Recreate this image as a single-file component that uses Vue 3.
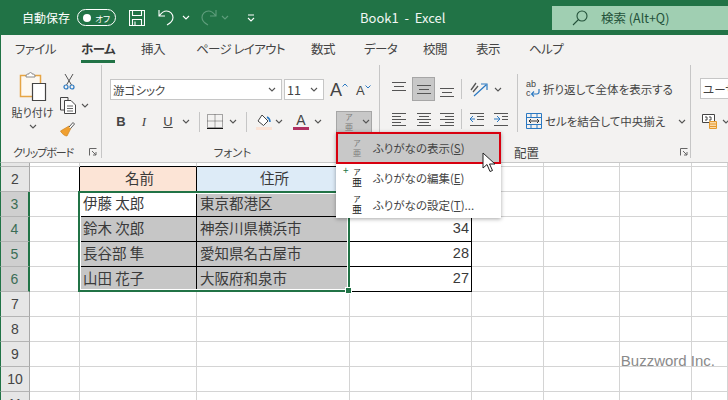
<script setup>
// タブの幅は文字と次のタブまでの間隔を含む
const tabs = [
  { label: 'ファイル', width: 66 },
  { label: 'ホーム', width: 60 },
  { label: '挿入', width: 55 },
  { label: 'ページ レイアウト', width: 115 },
  { label: '数式', width: 53 },
  { label: 'データ', width: 59 },
  { label: '校閲', width: 53 },
  { label: '表示', width: 53 },
  { label: 'ヘルプ', width: 40 }
]

const rowData = {
  2: ['', '名前', '住所', ''],
  3: ['', '伊藤 太郎', '東京都港区', ''],
  4: ['', '鈴木 次郎', '神奈川県横浜市', '34'],
  5: ['', '長谷部 隼', '愛知県名古屋市', '28'],
  6: ['', '山田 花子', '大阪府和泉市', '27']
}
const rows = [2, 3, 4, 5, 6, 7, 8, 9, 10, 11]
const columns = [0, 1, 2, 3, 4, 5, 6, 7]

const cellText = (r, c) => (rowData[r] ? rowData[r][c] || '' : '')

// 表の罫線と選択範囲の色
const cellClass = (r, c) => ({
  head1: r === 2 && c === 1,
  head2: r === 2 && c === 2,
  picked: r >= 3 && r <= 6 && (c === 2 || (c === 1 && r > 3)),
  lineRight: r >= 2 && r <= 6 && c <= 3,
  lineBottom: r >= 2 && r <= 6 && c >= 1 && c <= 3,
  num: c === 3
})
</script>

<template>
  <div class="window">
    <header class="titlebar">
      <span class="autosave">自動保存</span>
      <span class="toggle"><i class="dot"></i><em>オフ</em></span>
      <svg class="qat save" viewBox="0 0 16 16"><path d="M.5.5h15v15H.5zM3.5.5v5h9v-5M3.5 15.5v-6h9v6M6 11.5v4" /></svg>
      <svg class="qat undo" viewBox="0 0 16 17"><path d="M1 1v6h6M1.5 6.5C4 3 6 2 8.500 2 12 2 15 5 15 8.500 15 12 12.500 14 9 16" /></svg>
      <svg class="chev light" viewBox="0 0 8 5"><path d="M1 1l3 3 3-3" /></svg>
      <svg class="qat redo" viewBox="0 0 16 17"><path d="M15 1v6H9M14.500 6.500C12 3 10 2 7.500 2 4 2 1 5 1 8.500 1 12 3.500 14 7 16" /></svg>
      <svg class="chev dim" viewBox="0 0 8 5"><path d="M1 1l3 3 3-3" /></svg>
      <svg class="custom" viewBox="0 0 8 8"><path d="M1 1h6M1 4l3 3 3-3" /></svg>
      <span class="doc">Book1&nbsp; -&nbsp; Excel</span>
      <div class="search">
        <svg viewBox="0 0 16 16"><circle cx="10" cy="6" r="5" /><path d="M6.500 9.500L1 15" /></svg>
        <span>検索 (Alt+Q)</span>
      </div>
    </header>

    <nav class="tabs">
      <span v-for="t in tabs" :key="t.label" class="tab" :class="{ on: t.label === 'ホーム' }" :style="{ width: t.width + 'px' }">{{ t.label }}</span>
    </nav>

    <section class="ribbon">
      <div class="group clip">
        <div class="body clipbody">
          <div class="paste">
            <svg viewBox="0 0 28 31" width="28" height="31">
              <path d="M1.500 4.500h20v21h-20z" fill="#fdf8f0" stroke="#e6a544" stroke-width="1.500" />
              <path d="M7 5c0-2 2-2 3-2 0-2 3-2 3 0 1 0 3 0 3 2v1H7z" fill="#fff" stroke="#8a8a8a" />
              <path d="M13.500 12.500h13v17h-13z" fill="#fff" stroke="#444" stroke-width="1.200" />
            </svg>
            <span>貼り付け</span>
            <svg class="chev" viewBox="0 0 8 5"><path d="M1 1l3 3 3-3" /></svg>
          </div>
          <div class="cliptools">
            <svg viewBox="0 0 12 17" width="12" height="17"><path d="M2 1l6.500 11M10 1L3.500 12" fill="none" stroke="#555" /><circle cx="3" cy="14" r="2" fill="none" stroke="#2b79c2" stroke-width="1.200" /><circle cx="9" cy="14" r="2" fill="none" stroke="#2b79c2" stroke-width="1.200" /></svg>
            <div class="copyline">
              <svg viewBox="0 0 16 17" width="16" height="17"><path d="M5 13H.5V.5H8V3" fill="none" stroke="#444" /><path d="M4.500 3.500H11L15.500 8v8.500h-11z" fill="#fff" stroke="#444" /><path d="M7 9h6M7 11.500h6M7 14h6" stroke="#666" /></svg>
              <svg class="chev" viewBox="0 0 8 5"><path d="M1 1l3 3 3-3" /></svg>
            </div>
            <svg viewBox="0 0 16 16" width="16" height="16"><path d="M9 5l2 2-4 8c-2 0-5-2-6.500-5z" fill="#f0a030" stroke="#cf8420" stroke-width=".7" /><path d="M9 6l4-4.500 1.500 1.500L10.500 7.500" fill="#fff" stroke="#555" /></svg>
          </div>
        </div>
        <footer class="label cliplabel"><span>クリップボード</span><svg class="launcher" viewBox="0 0 8 8"><path d="M.5 7.500v-7h7M3 3l4 4M7 4v3H4" /></svg></footer>
      </div>

      <div class="group font">
        <div class="body fontbody">
          <div class="fontrow top">
            <div class="select fontname"><span>游ゴシック</span><svg class="chev" viewBox="0 0 8 5"><path d="M1 1l3 3 3-3" /></svg></div>
            <div class="select fontsize"><span>11</span><svg class="chev" viewBox="0 0 8 5"><path d="M1 1l3 3 3-3" /></svg></div>
            <span class="growA">A<svg viewBox="0 0 6 4"><path d="M.5 3.500L3 1l2.500 2.500" /></svg></span>
            <span class="growA small">A<svg viewBox="0 0 6 4"><path d="M.5.500L3 3 5.500.500" /></svg></span>
          </div>
          <div class="fontrow second">
            <b class="fmt bold">B</b>
            <i class="fmt italic">I</i>
            <u class="fmt under">U</u>
            <svg class="chev" viewBox="0 0 8 5"><path d="M1 1l3 3 3-3" /></svg>
            <span class="sep"></span>
            <svg class="border" viewBox="0 0 16 15" width="16" height="15"><path d="M.5.500h15v13H.5zM8 .500v13M.5 7h15" fill="none" stroke="#555" stroke-dasharray="1 1" /><path d="M0 14.500h16" stroke="#111" /></svg>
            <svg class="chev" viewBox="0 0 8 5"><path d="M1 1l3 3 3-3" /></svg>
            <span class="sep"></span>
            <svg class="fill" viewBox="0 0 16 16" width="16" height="16"><path d="M6 1l6 6-4.500 4.500L2 7z" fill="#fff" stroke="#444" /><path d="M11 3c2 1 3 3 3 5" fill="none" stroke="#2b79c2" stroke-width="1.500" /><path d="M0 13h16v3H0z" fill="#fbe3d6" /></svg>
            <svg class="chev" viewBox="0 0 8 5"><path d="M1 1l3 3 3-3" /></svg>
            <span class="colorA">A</span>
            <svg class="chev" viewBox="0 0 8 5"><path d="M1 1l3 3 3-3" /></svg>
            <span class="rubybtn">
              <span class="ruby dimmed"><small>ア</small><span>亜</span></span>
              <svg class="chev" viewBox="0 0 8 5"><path d="M1 1l3 3 3-3" /></svg>
            </span>
          </div>
        </div>
        <footer class="label center"><span>フォント</span><svg class="launcher" viewBox="0 0 8 8"><path d="M.5 7.500v-7h7M3 3l4 4M7 4v3H4" /></svg></footer>
      </div>

      <div class="group align">
        <div class="body alignbody">
          <div class="aligncol">
            <div class="alignrow">
              <svg class="lines" viewBox="0 0 14 20"><path d="M0 3.500h14M2 7.500h10M0 11.500h14" /></svg>
              <span class="pressed"><svg class="lines" viewBox="0 0 14 20"><path d="M0 6.500h14M2 10.500h10M0 14.500h14" /></svg></span>
              <svg class="lines" viewBox="0 0 14 20"><path d="M0 9.500h14M2 13.500h10M0 17.500h14" /></svg>
              <span class="sep short"></span>
              <svg class="orient" viewBox="0 0 18 17" width="18" height="17"><path d="M1 9l5-7M3 11l5-6" stroke="#555" fill="none" stroke-width="1.300" /><path d="M4 15L16 4M11 3h6v6" stroke="#2b79c2" fill="none" stroke-width="1.200" /></svg>
              <svg class="chev" viewBox="0 0 8 5"><path d="M1 1l3 3 3-3" /></svg>
            </div>
            <div class="alignrow lower">
              <svg class="lines" viewBox="0 0 14 14"><path d="M0 1.500h14M0 4.500h9M0 7.500h14M0 10.500h9M0 13.500h14" /></svg>
              <svg class="lines" viewBox="0 0 14 14"><path d="M0 1.500h14M2 4.500h10M0 7.500h14M2 10.500h10M0 13.500h14" /></svg>
              <svg class="lines" viewBox="0 0 14 14"><path d="M0 1.500h14M5 4.500h9M0 7.500h14M5 10.500h9M0 13.500h14" /></svg>
              <span class="sep short"></span>
              <svg class="lines indent" viewBox="0 0 14 14"><path class="blue" d="M5 7H0M3 4L0 7l3 3" /><path d="M7 4.500h7M7 7.500h7M0 13.500h14M0 1.500h14" /></svg>
              <svg class="lines indent" viewBox="0 0 14 14"><path class="blue" d="M0 7h5M3 4l3 3-3 3" /><path d="M8 4.500h6M8 7.500h6M0 13.500h14M0 1.500h14" /></svg>
            </div>
          </div>
          <span class="sep tall"></span>
          <div class="wrapcol">
            <div class="wraprow">
              <span class="abc"><span>ab</span><span class="c">c</span><svg viewBox="0 0 9 8" width="9" height="8"><path d="M8 0v3a2 2 0 0 1-2 2H1M3 2.500L.500 5 3 7.500" fill="none" stroke="#2b79c2" stroke-width="1.200" /></svg></span>
              <span>折り返して全体を表示する</span>
            </div>
            <div class="wraprow">
              <svg class="merge" viewBox="0 0 16 16" width="16" height="16"><path d="M.5.500h15v15H.5zM.5 4.500h15M.5 11.500h15M5 .500v4M11 .500v4M5 11.500v4M11 11.500v4" fill="none" stroke="#2b79c2" /><path d="M3 8h10M5 6L3 8l2 2M11 6l2 2-2 2" fill="none" stroke="#333" /></svg>
              <span>セルを結合して中央揃え</span>
              <svg class="chev" viewBox="0 0 8 5"><path d="M1 1l3 3 3-3" /></svg>
            </div>
          </div>
        </div>
        <footer class="label alignlabel"><span>配置</span><svg class="launcher" viewBox="0 0 8 8"><path d="M.5 7.500v-7h7M3 3l4 4M7 4v3H4" /></svg></footer>
      </div>

      <div class="group number">
        <div class="select numfmt"><span>ユーザ</span></div>
        <div class="numtools">
          <svg viewBox="0 0 16 15" width="16" height="15"><path d="M.5.500h12v8H.5z" fill="#fff" stroke="#444" /><path d="M3 3h2v3H3M7 3h2v3H7" fill="none" stroke="#444" /><path d="M7.500 7.500h7v7h-7z" fill="#fbd9a8" stroke="#e59a2c" /><path d="M8 10h6M8 12.500h6" stroke="#e59a2c" /></svg>
          <svg class="chev" viewBox="0 0 8 5"><path d="M1 1l3 3 3-3" /></svg>
        </div>
      </div>
    </section>

    <section class="sheet">
      <div class="grid">
        <div class="stubhead"></div>
        <div v-for="c in columns" :key="'s' + c" class="cell stub" :class="{ lineStub: c === 1 || c === 2 || c === 3 }"></div>
        <template v-for="r in rows" :key="r">
          <div class="rowhead" :class="{ active: r >= 3 && r <= 6 }">{{ r }}</div>
          <div v-for="c in columns" :key="c" class="cell" :class="cellClass(r, c)">{{ cellText(r, c) }}</div>
        </template>
      </div>
      <div class="selection"><i class="handle"></i></div>
    </section>

    <div class="menu">
      <div class="item hot">
        <span class="ruby dimmed"><small>ア</small><span>亜</span></span>
        <span>ふりがなの表示(<u>S</u>)</span>
      </div>
      <div class="item">
        <span class="ruby"><em>+</em><small>ア</small><span>亜</span></span>
        <span>ふりがなの編集(<u>E</u>)</span>
      </div>
      <div class="item">
        <span class="ruby"><small>ア</small><span>亜</span></span>
        <span>ふりがなの設定(<u>T</u>)...</span>
      </div>
    </div>

    <svg class="cursor" viewBox="0 0 16 21" width="16" height="21"><path d="M1 1v15l4-3.500 3 7 2.500-1-3-6.500H13z" fill="#fff" stroke="#222" /></svg>
    <span class="mark">Buzzword Inc.</span>
  </div>
</template>

<style>
html, body { margin: 0; background: #fff; }
</style>

<style scoped>
.window {
  position: relative;
  width: 728px;
  height: 400px;
  overflow: hidden;
  background: #fff;
  color: #444;
  font-family: "Noto Sans CJK JP", "Liberation Sans", sans-serif;
  font-feature-settings: "palt";
  font-size: 12px;
}

svg { display: block; flex: none; }
.chev { width: 8px; height: 5px; fill: none; stroke: #555; stroke-width: 1.1; }

/* タイトルバー */
.titlebar {
  height: 35px;
  display: flex;
  align-items: center;
  background: #217346;
  color: #fff;
  padding-left: 22px;
  box-sizing: border-box;
}
.autosave { flex: none; width: 48px; font-size: 12px; white-space: nowrap; font-feature-settings: normal; }
.toggle {
  flex: none;
  height: 15px;
  margin-left: 7px;
  border: 1px solid #fff;
  border-radius: 9px;
  display: flex;
  align-items: center;
  justify-content: space-between;
  padding: 0 5px;
  width: 27px;
}
.dot { width: 8px; height: 8px; border-radius: 50%; background: #fff; }
.toggle em { font-size: 8.500px; font-style: normal; }
.qat { fill: none; stroke: #fff; stroke-width: 1.1; }
.save { width: 16px; height: 16px; margin-left: 13px; }
.undo { width: 16px; height: 17px; margin-left: 13px; }
.chev.light { stroke: #fff; margin-left: 8px; }
.redo { width: 16px; height: 17px; margin-left: 11px; stroke: #5f9d7c; }
.chev.dim { stroke: #5f9d7c; margin-left: 4px; }
.custom { width: 8px; height: 8px; margin-left: 18px; fill: none; stroke: #fff; stroke-width: 1.100; }
.doc { margin-left: 105px; width: 197px; font-size: 13px; color: #f2f7f4; white-space: nowrap; }
.search {
  width: 180px;
  height: 24px;
  display: flex;
  align-items: center;
  gap: 13px;
  padding-left: 20px;
  box-sizing: border-box;
  background: #a0cfb2;
  color: #24523a;
  font-size: 12.500px;
}
.search svg { width: 16px; height: 16px; fill: none; stroke: #24523a; stroke-width: 1.100; }

/* タブ */
.tabs {
  height: 30px;
  display: flex;
  padding-left: 14px;
  background: #f3f2f1;
  border-left: 1px solid #217346;
  box-sizing: border-box;
  font-size: 12.500px;
  line-height: 28px;
  letter-spacing: -0.6px;
}
.tab { position: relative; flex: none; white-space: nowrap; }
.tab.on { font-weight: 700; color: #3a3a3a; }
.tab.on::after {
  content: "";
  position: absolute;
  left: 0;
  top: 25px;
  width: 34px;
  height: 3px;
  background: #217346;
}

/* リボン */
.ribbon {
  height: 98px;
  display: flex;
  background: #f3f2f1;
  border-left: 1px solid #217346;
  border-bottom: 1px solid #c8c8c8;
  box-sizing: border-box;
}
.group {
  flex: none;
  box-sizing: border-box;
  display: flex;
  flex-direction: column;
  padding-bottom: 4px;
}
.group.clip, .group.font, .group.align { border-right: 1px solid #c6c6c6; margin-bottom: 4px; padding-bottom: 0; }
.body { flex: 1; display: flex; }
.label {
  height: 18px;
  box-sizing: border-box;
  display: flex;
  align-items: center;
  font-size: 11.500px;
  padding: 6px 0 0 12px;
  position: relative;
}
.cliplabel span { font-size: 11px; letter-spacing: -1.1px; white-space: nowrap; }
.launcher {
  width: 8px;
  height: 8px;
  fill: none;
  stroke: #666;
  margin-left: auto;
  margin-right: 4px;
}

.clip { width: 101px; }
.clipbody { padding: 6px 0 0 11px; gap: 7px; }
.paste { width: 41px; display: flex; flex-direction: column; align-items: center; font-size: 11px; }
.paste span { margin-top: 1px; line-height: 18px; white-space: nowrap; }
.paste .chev { margin-top: 3px; }
.cliptools { display: flex; flex-direction: column; align-items: flex-start; gap: 7px; padding-top: 2px; }
.cliptools > svg:first-child { margin-left: 3px; }
.copyline { display: flex; align-items: center; gap: 5px; }

.font { width: 278px; }
.fontbody { flex-direction: column; padding: 13px 0 0 8px; }
.fontrow { display: flex; align-items: center; }
.select {
  height: 21px;
  box-sizing: border-box;
  background: #fff;
  border: 1px solid #c6c6c6;
  display: flex;
  align-items: center;
  justify-content: space-between;
  padding: 0 5px 0 2px;
}
.fontname { width: 172px; font-size: 11.500px; }
.fontsize { width: 40px; margin-left: 2px; font-size: 12.500px; }
.growA {
  display: flex;
  width: 22px;
  margin-left: 6px;
  font-family: "Liberation Sans", sans-serif;
  font-size: 18px;
  line-height: 20px;
}
.growA.small { font-size: 13px; margin-left: 4px; align-items: center; padding-top: 3px; }
.growA svg { width: 6px; height: 4px; fill: none; stroke: #2b79c2; stroke-width: 1; margin-top: 3px; }
.growA.small svg { margin-top: -8px; }
.second { margin-top: 9px; height: 23px; }
.fmt { width: 12px; text-align: center; font-family: "Liberation Sans", sans-serif; font-size: 13px; line-height: 16px; font-style: normal; }
.bold { margin-left: 5px; }
.italic { margin-left: 11px; font-family: "Liberation Serif", serif; font-style: italic; }
.under { margin-left: 12px; }
.fmt + .chev { margin-left: 8px; }
.sep { width: 1px; height: 20px; background: #c6c6c6; flex: none; }
.second > .chev:nth-of-type(1) { margin-right: 9px; }
.border { margin-left: 7px; }
.border + .chev { margin: 0 9px 0 6px; }
.fill { margin-left: 9px; }
.fill + .chev { margin-left: 3px; }
.colorA {
  width: 16px;
  margin-left: 10px;
  text-align: center;
  font-family: "Liberation Sans", sans-serif;
  font-size: 14px;
  line-height: 14px;
  border-bottom: 3px solid #b03060;
}
.colorA + .chev { margin-left: 5px; }
.rubybtn {
  width: 36px;
  height: 22px;
  margin-left: 14px;
  box-sizing: border-box;
  display: flex;
  align-items: center;
  gap: 6px;
  padding-left: 5px;
  background: #c8c8c8;
  border: 1px solid #a6a6a6;
}
.ruby {
  position: relative;
  display: flex;
  flex-direction: column;
  align-items: center;
  gap: 1px;
  width: 14px;
  color: #222;
}
.ruby small { font-size: 7.500px; line-height: 8px; }
.ruby span { font-size: 10px; line-height: 10px; }
.ruby em { position: absolute; left: -7px; top: -3px; color: #217346; font-style: normal; font-size: 10px; line-height: 10px; }
.ruby.dimmed { color: #7c7c7c; }
.ruby.dimmed span { font-size: 8.500px; line-height: 9px; }
.center { justify-content: center; padding: 6px 16px 0 0; }
.center .launcher { position: absolute; right: 0; top: 8px; }

.align { width: 311px; }
.alignbody { padding: 12px 0 0 12px; }
.aligncol { width: 125px; }
.alignrow { display: flex; align-items: center; height: 24px; }
.alignrow.lower { margin-top: 8px; height: 20px; }
.lines { width: 14px; height: 20px; fill: none; stroke: #555; stroke-width: 1; }
.lower .lines { height: 14px; }
.pressed {
  width: 23px;
  height: 24px;
  margin: 0 5px 0 6px;
  box-sizing: border-box;
  background: #c8c8c8;
  border: 1px solid #a6a6a6;
  display: flex;
  align-items: center;
  justify-content: center;
}
.sep.short { margin: 0 8px 0 7px; }
.lower .lines:nth-of-type(2) { margin: 0 9px 0 11px; }
.lower .lines.indent { width: 14px; margin: 0 10px 0 0; }
.lines .blue { stroke: #2b79c2; }
.orient + .chev { margin-left: 6px; }
.sep.tall { height: 58px; margin-top: -3px; }
.wrapcol { padding-left: 8px; font-size: 11.500px; white-space: nowrap; }
.wraprow { display: flex; align-items: center; height: 24px; gap: 3px; }
.wraprow + .wraprow { margin-top: 8px; }
.wraprow .chev { margin-left: 10px; }
.abc {
  position: relative;
  width: 14px;
  height: 18px;
  font-size: 9px;
  line-height: 9px;
  font-family: "Liberation Sans", sans-serif;
}
.abc span { display: block; }
.abc svg { position: absolute; right: 0; bottom: 1px; }
.alignlabel { padding-left: 134px; font-size: 12.500px; }
.alignlabel .launcher { margin-right: 2px; }

.number { flex: 1; padding: 13px 0 0 9px; overflow: hidden; }
.numfmt { width: 60px; font-size: 11.500px; white-space: nowrap; overflow: hidden; justify-content: flex-start; padding: 0 0 0 2px; }
.numtools { display: flex; align-items: center; gap: 4px; margin-top: 15px; padding-left: 2px; }

/* シート */
.sheet { position: relative; }
.grid {
  display: grid;
  grid-template-columns: 30px 50px 117px 153px 122px 72px 76px 72px 36px;
  grid-template-rows: 4px repeat(10, 25px);
}
.stubhead, .rowhead {
  background: #e6e6e6;
  border-right: 1px solid #a8a8a8;
  border-bottom: 1px solid #b4b4b4;
  border-left: 1px solid #217346;
  box-sizing: border-box;
}
.rowhead {
  display: flex;
  align-items: center;
  justify-content: center;
  font-family: "Liberation Sans", sans-serif;
  font-size: 14px;
  color: #444;
}
.rowhead.active {
  background: #cfcfcf;
  color: #3b6d55;
  border-right: 2px solid #217346;
}
.cell {
  box-sizing: border-box;
  border-right: 1px solid #d4d4d4;
  border-bottom: 1px solid #d4d4d4;
  padding: 0 0 1px 3px;
  font-size: 14.500px;
  line-height: 22px;
  color: #3a3a3a;
  white-space: nowrap;
  font-feature-settings: normal;
}
.cell.stub { padding: 0; }
.cell.lineStub { border-bottom-color: #000; }
.cell.head1 { background: #fce4d6; text-align: center; }
.cell.head2 { background: #ddebf7; text-align: center; }
.cell.picked { background: #c6c6c6; }
.cell.lineRight { border-right-color: #000; }
.cell.lineBottom { border-bottom-color: #000; }
.cell.num { text-align: right; padding: 0 2px 1px 0; font-family: "Liberation Sans", sans-serif; }

.selection {
  position: absolute;
  left: 78px;
  top: 28px;
  width: 272px;
  height: 101px;
  box-sizing: border-box;
  border: 2px solid #217346;
  outline: 1px solid #fff;
  outline-offset: -3px;
}
.handle {
  position: absolute;
  right: -4px;
  bottom: -4px;
  width: 5px;
  height: 5px;
  background: #217346;
  border: 1px solid #fff;
}

/* ふりがなメニュー */
.menu {
  position: absolute;
  left: 336px;
  top: 132px;
  width: 165px;
  height: 86px;
  background: #fff;
  box-shadow: 0 1px 4px rgba(0, 0, 0, 0.35);
  font-size: 11.500px;
}
.item {
  height: 27px;
  display: flex;
  align-items: center;
  gap: 9px;
  padding-left: 14px;
  box-sizing: border-box;
  white-space: nowrap;
}
.item.hot {
  height: 32px;
  padding-left: 12px;
  background: #c8c8c8;
  border: 2.500px solid #d8000f;
}

.cursor { position: absolute; left: 482px; top: 152px; }
.mark {
  position: absolute;
  right: 13px;
  top: 352px;
  font-family: "Liberation Sans", sans-serif;
  font-size: 15px;
  color: #8a8a8a;
}
</style>
